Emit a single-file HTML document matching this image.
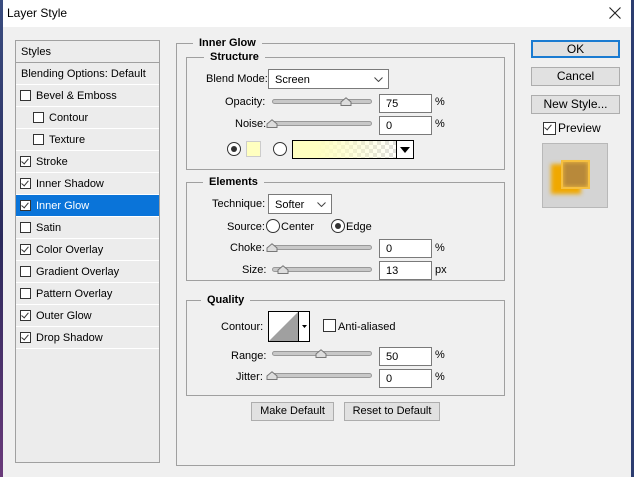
<!DOCTYPE html>
<html><head><style>
*{margin:0;padding:0;box-sizing:border-box}
body{width:634px;height:477px;overflow:hidden;background:#f0f0f0;font-family:"Liberation Sans",sans-serif;font-size:11px;color:#000;position:relative}
.a{position:absolute}
.t{position:absolute;white-space:nowrap;line-height:14px}
.grp{position:absolute;border:1px solid #a0a0a0}
.lg{position:absolute;background:#f0f0f0;padding:0 6px;font-weight:bold;line-height:12px}
.row{position:absolute;left:16px;width:143px;height:22px;border-bottom:1px solid #fff}
.cb{position:absolute;width:11px;height:11px;border:1px solid #333;background:#fff}
.ck::after{content:"";position:absolute;left:2px;top:0px;width:3px;height:6px;border:solid #333;border-width:0 1.5px 1.5px 0;transform:rotate(40deg)}
.inp{position:absolute;background:#fff;border:1px solid #7a7a7a;height:19px;padding-left:6px;line-height:19px}
.sl{position:absolute;height:5px;border-radius:3px;background:#c8c8c8;border:1px solid #999}
.th{position:absolute;width:12px;height:9px}
.btn{position:absolute;background:#e1e1e1;border:1px solid #adadad;text-align:center;line-height:17px;font-size:12px}
.rad{position:absolute;width:14px;height:14px;border-radius:50%;border:1px solid #333;background:#fff}
.rad.on::after{content:"";position:absolute;left:3px;top:3px;width:6px;height:6px;border-radius:50%;background:#333}
.chev{position:absolute;right:5px;top:7px}
</style></head><body>
<div class="a" style="left:0;top:0;width:634px;height:27px;background:#fff"></div>
<div class="a" style="left:0;top:0;width:3px;height:477px;background:linear-gradient(#3a4d80,#2b2a5c,#6a3a7a)"></div>
<div class="a" style="left:631px;top:0;width:3px;height:477px;background:#2c3d70"></div>
<div class="t" style="left:7px;top:6px;font-size:12px">Layer Style</div>
<svg class="a" style="left:609px;top:7px" width="12" height="12"><path d="M0.5 0.5L11.5 11.5M11.5 0.5L0.5 11.5" stroke="#222" stroke-width="1.1"/></svg>

<div class="a" style="left:15px;top:40px;width:145px;height:423px;border:1px solid #a0a0a0;background:#ececec"></div>
<div class="row" style="top:41px;height:22px;border-bottom:1px solid #a0a0a0"><span class="t" style="left:5px;top:4px">Styles</span></div>
<div class="row" style="top:63px;height:22px;"><span class="t" style="left:5px;top:4px">Blending Options: Default</span></div>
<div class="row" style="top:85px"><span class="cb" style="left:4px;top:5px"></span><span class="t" style="left:20px;top:4px">Bevel &amp; Emboss</span></div>
<div class="row" style="top:107px"><span class="cb" style="left:17px;top:5px"></span><span class="t" style="left:33px;top:4px">Contour</span></div>
<div class="row" style="top:129px"><span class="cb" style="left:17px;top:5px"></span><span class="t" style="left:33px;top:4px">Texture</span></div>
<div class="row" style="top:151px"><span class="cb ck" style="left:4px;top:5px"></span><span class="t" style="left:20px;top:4px">Stroke</span></div>
<div class="row" style="top:173px"><span class="cb ck" style="left:4px;top:5px"></span><span class="t" style="left:20px;top:4px">Inner Shadow</span></div>
<div class="row" style="top:195px;background:#0a74d9;color:#fff"><span class="cb ck" style="left:4px;top:5px"></span><span class="t" style="left:20px;top:4px">Inner Glow</span></div>
<div class="row" style="top:217px"><span class="cb" style="left:4px;top:5px"></span><span class="t" style="left:20px;top:4px">Satin</span></div>
<div class="row" style="top:239px"><span class="cb ck" style="left:4px;top:5px"></span><span class="t" style="left:20px;top:4px">Color Overlay</span></div>
<div class="row" style="top:261px"><span class="cb" style="left:4px;top:5px"></span><span class="t" style="left:20px;top:4px">Gradient Overlay</span></div>
<div class="row" style="top:283px"><span class="cb" style="left:4px;top:5px"></span><span class="t" style="left:20px;top:4px">Pattern Overlay</span></div>
<div class="row" style="top:305px"><span class="cb ck" style="left:4px;top:5px"></span><span class="t" style="left:20px;top:4px">Outer Glow</span></div>
<div class="row" style="top:327px"><span class="cb ck" style="left:4px;top:5px"></span><span class="t" style="left:20px;top:4px">Drop Shadow</span></div>

<div class="grp" style="left:176px;top:43px;width:339px;height:423px"></div>
<div class="lg" style="left:193px;top:37px">Inner Glow</div>
<div class="grp" style="left:186px;top:57px;width:319px;height:113px"></div>
<div class="lg" style="left:204px;top:51px">Structure</div>
<div class="t" style="left:206px;top:72px">Blend Mode:</div>
<div class="inp" style="left:268px;top:69px;width:121px;height:20px;line-height:20px">Screen<svg class="chev" width="9" height="5"><path d="M0.5 0.5L4.5 4.5L8.5 0.5" fill="none" stroke="#444"/></svg></div>
<div class="t" style="left:225px;top:95px">Opacity:</div>
<div class="sl" style="left:272px;top:99px;width:100px"></div>
<svg class="th" style="left:340px;top:97px" viewBox="0 0 12 9"><path d="M1 8.5V5L6 .8 11 5V8.5Z" fill="#ddd" stroke="#777"/></svg>
<div class="inp" style="left:379px;top:94px;width:53px">75</div><div class="t" style="left:435px;top:95px">%</div>
<div class="t" style="left:235px;top:117px">Noise:</div>
<div class="sl" style="left:272px;top:121px;width:100px"></div>
<svg class="th" style="left:266px;top:119px" viewBox="0 0 12 9"><path d="M1 8.5V5L6 .8 11 5V8.5Z" fill="#ddd" stroke="#777"/></svg>
<div class="inp" style="left:379px;top:116px;width:53px">0</div><div class="t" style="left:435px;top:117px">%</div>
<div class="rad on" style="left:227px;top:142px"></div>
<div class="a" style="left:246px;top:141px;width:15px;height:16px;background:#ffffc0;border:1px solid #ccc"></div>
<div class="rad" style="left:273px;top:142px"></div>
<div class="a" style="left:292px;top:140px;width:122px;height:19px;border:1px solid #000;background:linear-gradient(90deg,#ffffc0 20%,rgba(255,255,192,0) 90%),repeating-conic-gradient(#ddd 0 25%,#fff 0 50%) 0 0/8px 8px"></div>
<div class="a" style="left:396px;top:140px;width:18px;height:19px;border:1px solid #000;background:#fff"></div>
<svg class="a" style="left:400px;top:147px" width="10" height="6"><path d="M0 0H10L5 6Z" fill="#000"/></svg>

<div class="grp" style="left:186px;top:182px;width:319px;height:99px"></div>
<div class="lg" style="left:203px;top:176px">Elements</div>
<div class="t" style="left:212px;top:197px">Technique:</div>
<div class="inp" style="left:268px;top:194px;width:64px;height:20px;line-height:20px">Softer<svg class="chev" width="9" height="5"><path d="M0.5 0.5L4.5 4.5L8.5 0.5" fill="none" stroke="#444"/></svg></div>
<div class="t" style="left:227px;top:220px">Source:</div>
<div class="rad" style="left:266px;top:219px"></div><div class="t" style="left:281px;top:220px">Center</div>
<div class="rad on" style="left:331px;top:219px"></div><div class="t" style="left:346px;top:220px">Edge</div>
<div class="t" style="left:230px;top:241px">Choke:</div>
<div class="sl" style="left:272px;top:245px;width:100px"></div>
<svg class="th" style="left:266px;top:243px" viewBox="0 0 12 9"><path d="M1 8.5V5L6 .8 11 5V8.5Z" fill="#ddd" stroke="#777"/></svg>
<div class="inp" style="left:379px;top:239px;width:53px">0</div><div class="t" style="left:435px;top:241px">%</div>
<div class="t" style="left:242px;top:263px">Size:</div>
<div class="sl" style="left:272px;top:267px;width:100px"></div>
<svg class="th" style="left:277px;top:265px" viewBox="0 0 12 9"><path d="M1 8.5V5L6 .8 11 5V8.5Z" fill="#ddd" stroke="#777"/></svg>
<div class="inp" style="left:379px;top:261px;width:53px">13</div><div class="t" style="left:435px;top:263px">px</div>

<div class="grp" style="left:186px;top:300px;width:319px;height:96px"></div>
<div class="lg" style="left:201px;top:294px">Quality</div>
<div class="t" style="left:221px;top:320px">Contour:</div>
<svg class="a" style="left:268px;top:311px" width="42" height="31"><rect x=".5" y=".5" width="41" height="30" fill="#fff" stroke="#000"/><path d="M1 30L30 1V30Z" fill="#a0a0a0"/><line x1="30.5" y1="0" x2="30.5" y2="31" stroke="#000"/><path d="M34 14H39L36.5 17Z" fill="#000"/></svg>
<div class="cb" style="left:323px;top:319px;width:13px;height:13px"></div><div class="t" style="left:338px;top:320px">Anti-aliased</div>
<div class="t" style="left:231px;top:349px">Range:</div>
<div class="sl" style="left:272px;top:351px;width:100px"></div>
<svg class="th" style="left:315px;top:349px" viewBox="0 0 12 9"><path d="M1 8.5V5L6 .8 11 5V8.5Z" fill="#ddd" stroke="#777"/></svg>
<div class="inp" style="left:379px;top:347px;width:53px">50</div><div class="t" style="left:435px;top:348px">%</div>
<div class="t" style="left:236px;top:370px">Jitter:</div>
<div class="sl" style="left:272px;top:373px;width:100px"></div>
<svg class="th" style="left:266px;top:371px" viewBox="0 0 12 9"><path d="M1 8.5V5L6 .8 11 5V8.5Z" fill="#ddd" stroke="#777"/></svg>
<div class="inp" style="left:379px;top:369px;width:53px">0</div><div class="t" style="left:435px;top:370px">%</div>
<div class="btn" style="left:251px;top:402px;width:83px;height:19px;font-size:11px">Make Default</div>
<div class="btn" style="left:344px;top:402px;width:96px;height:19px;font-size:11px">Reset to Default</div>

<div class="btn" style="left:531px;top:40px;width:89px;height:18px;border:2px solid #1a7bd1;line-height:14px">OK</div>
<div class="btn" style="left:531px;top:67px;width:89px;height:19px">Cancel</div>
<div class="btn" style="left:531px;top:95px;width:89px;height:19px">New Style...</div>
<div class="cb ck" style="left:543px;top:122px;width:13px;height:13px"></div>
<div class="t" style="left:558px;top:121px;font-size:12px">Preview</div>
<div class="a" style="left:542px;top:143px;width:66px;height:65px;background:#d4d4d4;border:1px solid #b8b8b8;overflow:hidden">
<div class="a" style="left:8px;top:20px;width:30px;height:30px;background:#f0a800;filter:blur(2px)"></div>
<div class="a" style="left:18px;top:16px;width:29px;height:29px;background:#b8893a;border:2px solid #f6c040;box-shadow:inset 0 0 4px #f6c040"></div>
</div>
</body></html>
